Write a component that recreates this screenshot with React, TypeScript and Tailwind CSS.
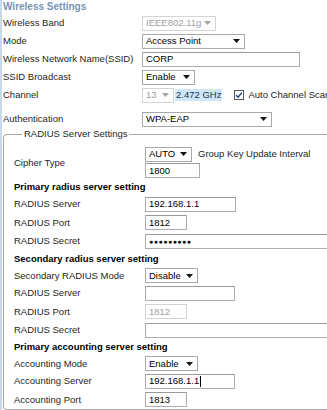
function Arrow({ disabled }: { disabled?: boolean }) {
  return (
    <svg width="7" height="4" viewBox="0 0 7 4" className="shrink-0">
      <path d="M0 0h7L3.5 4z" fill={disabled ? "#a3a3a3" : "#111"} />
    </svg>
  );
}

function Sel({ value, className, disabled }: { value: string; className: string; disabled?: boolean }) {
  return (
    <div
      className={`flex h-[15px] shrink-0 items-center justify-between border bg-white pl-[3px] pr-[4px] ${
        disabled ? "border-[#d4d4d4] text-[#a0a0a0]" : "border-[#a9a9a9] text-black"
      } ${className}`}
    >
      <span className="whitespace-nowrap">{value}</span>
      <Arrow disabled={disabled} />
    </div>
  );
}

function Inp({
  value,
  className,
  disabled,
  caret,
  dots,
}: {
  value?: string;
  className: string;
  disabled?: boolean;
  caret?: boolean;
  dots?: boolean;
}) {
  return (
    <div
      className={`flex h-[15px] shrink-0 items-center border bg-white pl-[3px] ${
        disabled ? "border-[#d4d4d4] text-[#a0a0a0]" : "border-[#abadb3] border-t-[#9a9a9a] text-black"
      } ${className}`}
    >
      {dots ? (
        <span className="text-[7px] leading-none tracking-[0.5px]">●●●●●●●●●</span>
      ) : (
        <span className="whitespace-nowrap">{value}</span>
      )}
      {caret && <span className="ml-[1px] h-[11px] w-px bg-black" />}
    </div>
  );
}

function Row({ label, h, children }: { label: string; h: string; children?: React.ReactNode }) {
  return (
    <div className={`flex items-center ${h}`}>
      <div className="w-[139px] shrink-0 whitespace-nowrap">{label}</div>
      {children}
    </div>
  );
}

function FRow({ label, h, children }: { label: string; h: string; children?: React.ReactNode }) {
  return (
    <div className={`flex items-center ${h}`}>
      <div className="w-[131px] shrink-0 whitespace-nowrap">{label}</div>
      {children}
    </div>
  );
}

function Head({ text, h }: { text: string; h: string }) {
  return <div className={`flex items-center font-bold text-black ${h}`}>{text}</div>;
}

export default function App() {
  return (
    <div className="h-[410px] w-[327px] overflow-hidden bg-white font-['Liberation_Sans',Arial,sans-serif] text-[9.5px] leading-[12px] text-[#1e1e1e]">
      <div className="h-full border-l-2 border-[#c9d9ea] pl-[1px]">
        {/* TITLE */}
        <div className="flex h-[14px] items-center text-[10px] font-bold text-[#7893b3]">Wireless Settings</div>

        <Row label="Wireless Band" h="h-[18px]">
          <Sel value="IEEE802.11g" className="w-[74px]" disabled />
        </Row>
        <Row label="Mode" h="h-[18px]">
          <Sel value="Access Point" className="w-[103px]" />
        </Row>
        <Row label="Wireless Network Name(SSID)" h="h-[18px]">
          <Inp value="CORP" className="w-[158px]" />
        </Row>
        <Row label="SSID Broadcast" h="h-[18px]">
          <Sel value="Enable" className="w-[53px]" />
        </Row>
        <Row label="Channel" h="h-[18px]">
          <Sel value="13" className="w-[32px]" disabled />
          <span className="ml-[1px] whitespace-nowrap bg-[#cfe6f8] px-[1px] text-[#1b3552]">2.472 GHz</span>
          <svg width="10" height="10" viewBox="0 0 10 10" className="ml-[12px] shrink-0">
            <rect x="0.5" y="0.5" width="9" height="9" fill="#fff" stroke="#5a5a5a" />
            <path d="M2.2 5.2 4.1 7.2 7.9 2.6" fill="none" stroke="#1f3a78" strokeWidth="1.4" />
          </svg>
          <span className="ml-[4px] whitespace-nowrap">Auto Channel Scan</span>
        </Row>
        <Row label="Authentication" h="mt-[6px] h-[18px]">
          <Sel value="WPA-EAP" className="w-[130px]" />
        </Row>

        {/* RADIUS FIELDSET */}
        <fieldset className="w-[321px] rounded-[4px] border border-[#a8a8a8] border-r-[#b3c8de] pl-[10px]">
          <legend className="ml-[8px] px-[2px] leading-[12px]">RADIUS Server Settings</legend>
          <div className="pt-[6px]">
            <div className="flex">
              <div className="flex h-[33px] w-[131px] shrink-0 items-center">Cipher Type</div>
              <div>
                <div className="flex h-[16px] items-center">
                  <Sel value="AUTO" className="w-[47px]" />
                  <span className="ml-[6px] whitespace-nowrap">Group Key Update Interval</span>
                </div>
                <div className="flex h-[17px] items-center">
                  <Inp value="1800" className="w-[55px]" />
                </div>
              </div>
            </div>

            <Head text="Primary radius server setting" h="h-[16px]" />
            <FRow label="RADIUS Server" h="h-[18px]">
              <Inp value="192.168.1.1" className="w-[91px]" />
            </FRow>
            <FRow label="RADIUS Port" h="h-[19px]">
              <Inp value="1812" className="w-[42px]" />
            </FRow>
            <FRow label="RADIUS Secret" h="h-[18px]">
              <Inp dots className="w-[190px]" />
            </FRow>

            <Head text="Secondary radius server setting" h="h-[17px]" />
            <FRow label="Secondary RADIUS Mode" h="h-[17px]">
              <Sel value="Disable" className="w-[53px]" />
            </FRow>
            <FRow label="RADIUS Server" h="h-[18px]">
              <Inp value="" className="w-[90px]" />
            </FRow>
            <FRow label="RADIUS Port" h="h-[19px]">
              <Inp value="1812" className="w-[42px]" disabled />
            </FRow>
            <FRow label="RADIUS Secret" h="h-[18px]">
              <Inp value="" className="w-[190px]" />
            </FRow>

            <Head text="Primary accounting server setting" h="h-[16px]" />
            <FRow label="Accounting Mode" h="h-[17px]">
              <Sel value="Enable" className="w-[53px]" />
            </FRow>
            <FRow label="Accounting Server" h="h-[18px]">
              <Inp value="192.168.1.1" className="w-[90px]" caret />
            </FRow>
            <FRow label="Accounting Port" h="h-[19px]">
              <Inp value="1813" className="w-[42px]" />
            </FRow>
          </div>
        </fieldset>
      </div>
    </div>
  );
}
